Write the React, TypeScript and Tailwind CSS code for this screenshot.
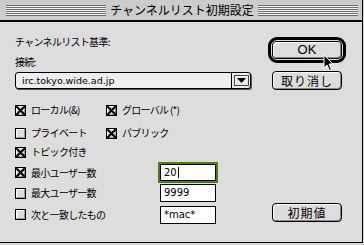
import React from "react"

const jp = "font-['Noto_Sans_CJK_JP',sans-serif]"

function CheckBox({ checked }: { checked: boolean }) {
  return (
    <svg width="11" height="11" viewBox="0 0 11 11" className="shrink-0">
      <rect x="0.5" y="0.5" width="10" height="10" fill="#dddddd" stroke="#000" />
      <path d="M1.5 9.5V1.5H9.5" stroke="#fff" fill="none" />
      <path d="M1.5 9.5H9.5V1.5" stroke="#999" fill="none" />
      {checked && (
        <path d="M2 2L9 9M9 2L2 9" stroke="#000" strokeWidth="2" strokeLinecap="square" />
      )}
    </svg>
  )
}

function Check({ label, checked }: { label: string; checked: boolean }) {
  return (
    <div className="flex items-center gap-[5px]">
      <CheckBox checked={checked} />
      <span className={`${jp} text-[10px] leading-[12px] tracking-[-0.7px] text-black whitespace-nowrap`}>
        {label}
      </span>
    </div>
  )
}

function Button({ label, className = "" }: { label: string; className?: string }) {
  return (
    <div
      className={`flex h-[19px] w-[70px] items-center justify-center rounded-[4px] border border-black bg-[#dddddd] shadow-[inset_1px_1px_0_#ffffff,inset_-1px_-1px_0_#888888] ${className}`}
    >
      <span className={`${jp} text-[12px] leading-[14px] tracking-[1px] text-black`}>{label}</span>
    </div>
  )
}

function Field({ value, focused, h }: { value: string; focused?: boolean; h: string }) {
  return (
    <div
      className={`ml-[1px] flex w-[56px] items-center border border-black bg-white pl-[3px] ${h} ${
        focused ? "outline-2 outline-[#4f8000]" : ""
      }`}
    >
      <span className="font-['DejaVu_Sans',sans-serif] text-[10px] leading-[12px] text-black">{value}</span>
      {focused && <span className="ml-[1px] h-[11px] w-[1px] bg-black" />}
    </div>
  )
}

const stripes =
  "h-[11px] w-[100px] bg-[repeating-linear-gradient(to_bottom,#6e6e6e_0px,#6e6e6e_1px,#f2f2f2_1px,#f2f2f2_2px)]"

export default function App() {
  return (
    <div className="relative h-[245px] w-[364px] overflow-hidden bg-[#d4d4d4]">
      <div className="flex h-[243px] w-[363px] flex-col border-b border-r border-black">
        {/* Title bar */}
        <div className="flex h-[22px] shrink-0 items-center border-b-2 border-black bg-[#cccccc] pl-[6px]">
          <div className={stripes} />
          <div className={`${jp} mx-[4px] w-[144px] text-center text-[12px] leading-[14px] text-black`}>
            チャンネルリスト初期設定
          </div>
          <div className={stripes} />
        </div>

        {/* Body */}
        <div className="flex flex-1 bg-[#dddddd]">
          {/* Left */}
          <div className="flex w-[257px] flex-col pl-[15px]">
            <div className={`${jp} mt-[13px] h-[14px] text-[10px] leading-[14px] tracking-[-0.7px] text-black`}>
              チャンネルリスト基準:
            </div>
            <div className={`${jp} mt-[6px] h-[14px] text-[10px] leading-[14px] tracking-[-0.7px] text-black`}>
              接続:
            </div>

            {/* Popup */}
            <div className="mt-[3px] flex h-[17px] w-[236px] items-center rounded-[3px] border border-black bg-[#eeeeee] shadow-[1px_1px_0_#555555]">
              <span className="flex-1 pl-[6px] font-['DejaVu_Sans',sans-serif] text-[9.5px] leading-[12px] text-black">
                irc.tokyo.wide.ad.jp
              </span>
              <div className="flex h-full w-[19px] items-center justify-center border-l border-black">
                <div className="flex h-[11px] w-[15px] items-center justify-center border border-[#444] bg-[#e8e8e8] shadow-[inset_1px_1px_0_#ffffff]">
                  <svg width="9" height="5" viewBox="0 0 9 5">
                    <path d="M0 0H9L4.5 5Z" fill="#000" />
                  </svg>
                </div>
              </div>
            </div>

            <div className="mt-[11px] flex h-[20px] items-center">
              <div className="w-[91px]">
                <Check label="ローカル(&)" checked />
              </div>
              <Check label="グローバル (*)" checked />
            </div>
            <div className="mt-[1px] flex h-[24px] items-center">
              <div className="w-[91px]">
                <Check label="プライベート" checked={false} />
              </div>
              <Check label="パブリック" checked />
            </div>
            <div className="flex h-[14px] items-center">
              <Check label="トピック付き" checked />
            </div>
            <div className="mt-[3px] flex h-[21px] items-center">
              <div className="w-[144px]">
                <Check label="最小ユーザー数" checked />
              </div>
              <Field value="20" focused h="h-[17px]" />
            </div>
            <div className="flex h-[20px] items-center">
              <div className="w-[144px]">
                <Check label="最大ユーザー数" checked={false} />
              </div>
              <Field value="9999" h="h-[18px]" />
            </div>
            <div className="mt-[2px] flex h-[19px] items-center">
              <div className="w-[144px]">
                <Check label="次と一致したもの" checked={false} />
              </div>
              <Field value="*mac*" h="h-[18px]" />
            </div>
          </div>

          {/* Right */}
          <div className="ml-[11px] flex w-[78px] flex-col items-center">
            <div className="mt-[15px] rounded-[9px] border-[3px] border-black p-[1px]">
              <div className="flex h-[18px] w-[70px] items-center justify-center rounded-[4px] border border-black bg-[#dddddd] shadow-[inset_1px_1px_0_#ffffff,inset_-1px_-1px_0_#888888]">
                <span className="font-['Liberation_Sans',sans-serif] text-[13px] leading-[14px] text-black">OK</span>
              </div>
            </div>
            <Button label="取り消し" className="mt-[8px]" />
            <Button label="初期値" className="mt-[113px]" />
          </div>
        </div>
      </div>

      {/* Cursor */}
      <svg className="absolute left-[323px] top-[54px]" width="12" height="18" viewBox="0 0 12 18">
        <path d="M1 1V14L4 11L6.5 16.5L8.5 15.5L6 10H10Z" fill="#000" stroke="#fff" strokeWidth="1" />
      </svg>
    </div>
  )
}
